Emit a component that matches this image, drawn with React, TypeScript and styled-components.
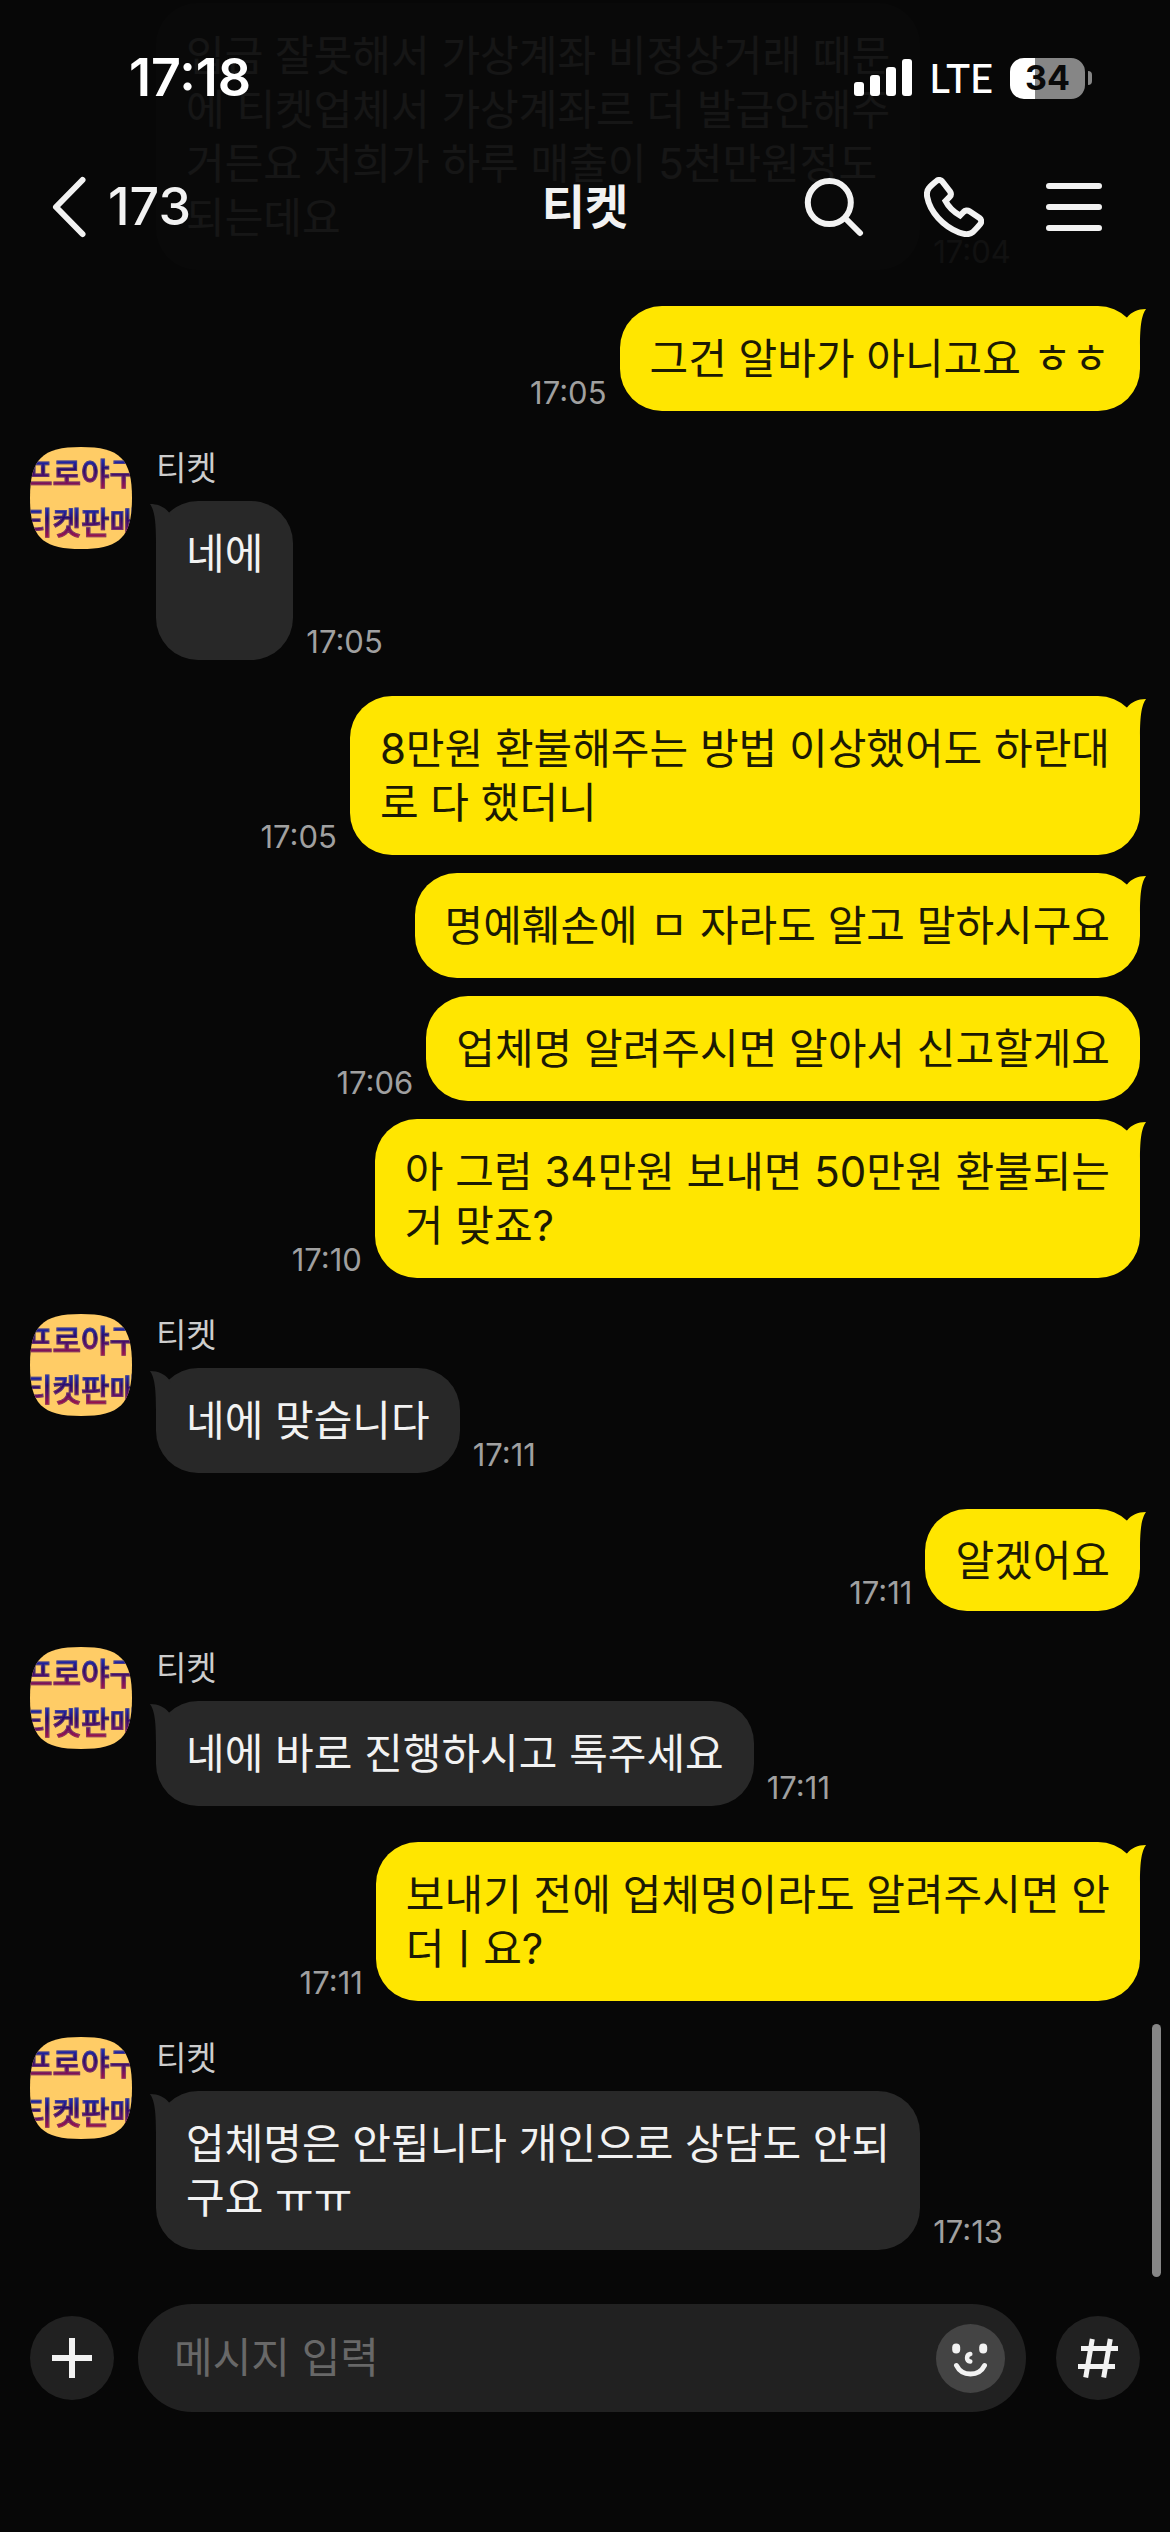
import React from 'react';
import styled, { createGlobalStyle, css } from 'styled-components';

const color = {
  page: '#070707',
  incoming: '#282828',
  outgoing: '#ffe600',
  light: '#f2f2f2',
  field: '#212121',
};

const GlobalStyle = createGlobalStyle`
  *, *::before, *::after { box-sizing: border-box; }
  html, body { margin: 0; background: ${color.page}; }
  body, button, input {
    font-family: Inter, 'Noto Sans CJK KR', 'Noto Sans', sans-serif;
  }
`;

const Screen = styled.div`
  position: relative;
  display: flex;
  flex-direction: column;
  min-height: 100vh;
  background: ${color.page};
  color: ${color.light};
`;

/* ---------- header ---------- */

const Header = styled.header`
  position: absolute;
  inset: 0 0 auto 0;
  z-index: 2;
  padding-bottom: 18px;
  background: rgba(7, 7, 7, 0.94);
`;

const StatusBar = styled.div`
  display: flex;
  align-items: center;
  justify-content: space-between;
  height: 156px;
  padding: 0 78px 0 129px;
  color: #fff;
`;

const Clock = styled.time`
  font-size: 52px;
  font-weight: 600;
  line-height: 60px;
`;

const StatusIcons = styled.div`
  display: flex;
  align-items: center;
  gap: 17px;
`;

const Carrier = styled.span`
  font-family: Lato, 'Noto Sans', sans-serif;
  font-size: 40px;
  font-weight: 500;
  line-height: 48px;
`;

const Battery = styled.div`
  display: flex;
  align-items: center;
  gap: 3px;
`;

const BatteryBody = styled.div`
  display: grid;
  place-items: center;
  width: 75px;
  height: 41px;
  border-radius: 14px;
  background: linear-gradient(to right, #fff 34%, #868686 34%);
  color: #0a0a0a;
  font-size: 34px;
  font-weight: 700;
  line-height: 40px;
`;

const BatteryCap = styled.div`
  width: 4px;
  height: 14px;
  border-radius: 0 8px 8px 0;
  background: #868686;
`;

const NavBar = styled.div`
  display: grid;
  grid-template-columns: 1fr auto 1fr;
  align-items: center;
  height: 102px;
  padding: 0 66px 0 48px;
`;

const PlainButton = styled.button`
  display: flex;
  align-items: center;
  padding: 0;
  border: 0;
  background: none;
  color: inherit;
`;

const BackButton = styled(PlainButton)`
  gap: 20px;
  font-size: 52px;
  font-weight: 500;
  line-height: 60px;
`;

const RoomTitle = styled.h1`
  margin: 0 0 0 18px;
  font-size: 47px;
  font-weight: 700;
  line-height: 60px;
`;

const NavActions = styled.div`
  display: flex;
  justify-content: flex-end;
  gap: 60px;
`;

/* ---------- conversation ---------- */

const Conversation = styled.main`
  display: flex;
  flex: 1;
  flex-direction: column;
  gap: 36px;
  padding: 3px 30px 54px;
`;

const IncomingGroup = styled.section`
  display: grid;
  grid-template-columns: 102px 1fr;
  gap: 24px;
  align-items: start;
`;

const OutgoingGroup = styled.section`
  display: flex;
  flex-direction: column;
  gap: 18px;
`;

const IncomingBody = styled.div`
  grid-column: 2;
`;

const Sender = styled.div`
  height: 54px;
  color: #cdcdcd;
  font-size: 33px;
  line-height: 42px;
`;

const AvatarTile = styled.div`
  display: flex;
  flex-direction: column;
  align-items: center;
  justify-content: center;
  width: 102px;
  height: 102px;
  overflow: hidden;
  background: #ffcc66;
  clip-path: path('M51 0C90 0 102 12 102 51S90 102 51 102 0 90 0 51 12 0 51 0Z');
`;

const AvatarText = styled.span`
  background: linear-gradient(to bottom, #1a2ab0 24%, #2a0a6a 42%, #5c0f68 60%, #a01048 78%);
  background-clip: text;
  -webkit-background-clip: text;
  -webkit-text-stroke: 1px rgba(120, 90, 110, 0.5);
  color: transparent;
  font-size: 31px;
  font-weight: 500;
  line-height: 49px;
  white-space: nowrap;
`;

const MessageRow = styled.div<{ $own?: boolean }>`
  display: flex;
  flex-direction: ${(p) => (p.$own ? 'row-reverse' : 'row')};
  align-items: flex-end;
  gap: 13px;
`;

const Bubble = styled.p<{ $own?: boolean; $compact?: boolean }>`
  position: relative;
  margin: 0;
  padding: ${(p) => (p.$compact ? '25px 30px 23px' : '26px 30px 25px')};
  border-radius: 42px;
  background: ${(p) => (p.$own ? color.outgoing : color.incoming)};
  color: ${(p) => (p.$own ? '#1c1a04' : color.light)};
  font-size: 42px;
  line-height: 54px;
  white-space: pre-wrap;
`;

const TailSvg = styled.svg<{ $own?: boolean }>`
  position: absolute;
  top: 0;
  width: 24px;
  height: 42px;
  ${(p) =>
    p.$own
      ? css`
          right: -6px;
          fill: ${color.outgoing};
        `
      : css`
          left: -6px;
          fill: ${color.incoming};
          transform: scaleX(-1);
        `}
`;

const Stamp = styled.time`
  color: #a0a0a0;
  font-size: 31px;
  line-height: 36px;
`;

const ScrollThumb = styled.div`
  position: absolute;
  right: 9px;
  bottom: 255px;
  width: 9px;
  height: 253px;
  border-radius: 5px;
  background: #868686;
`;

/* ---------- composer ---------- */

const Composer = styled.form`
  display: flex;
  align-items: center;
  gap: 24px;
  padding: 0 30px 120px;
`;

const RoundButton = styled(PlainButton)`
  flex: none;
  width: 84px;
  height: 84px;
  border-radius: 50%;
  background: ${color.field};
`;

const Field = styled.div`
  display: flex;
  flex: 1;
  align-items: center;
  height: 108px;
  margin-right: 6px;
  padding: 0 21px 0 36px;
  border-radius: 54px;
  background: ${color.field};
`;

const FieldInput = styled.input`
  flex: 1;
  min-width: 0;
  padding: 0;
  border: 0;
  outline: 0;
  background: none;
  color: ${color.light};
  font-size: 42px;
  line-height: 54px;

  &::placeholder {
    color: #686868;
    opacity: 1;
  }
`;

const EmojiButton = styled(PlainButton)`
  flex: none;
  width: 69px;
  height: 69px;
  border-radius: 50%;
  background: #444;
`;

/* ---------- drawings ---------- */

const Signal = () => (
  <svg width="58" height="38" viewBox="0 0 58 38" fill="#fff" aria-hidden="true">
    <rect x="0" y="23" width="10" height="14" rx="3" />
    <rect x="16" y="16" width="10" height="21" rx="3" />
    <rect x="32" y="8" width="10" height="29" rx="3" />
    <rect x="48" y="0" width="10" height="37" rx="3" />
  </svg>
);

const Chevron = () => (
  <svg width="40" height="66" viewBox="0 0 40 66" fill="none" stroke="currentColor" strokeWidth="6" strokeLinecap="round" strokeLinejoin="round" aria-hidden="true">
    <path d="M34.500 6 8 33l26.500 27" />
  </svg>
);

const NavIcon = ({ children }: { children: React.ReactNode }) => (
  <svg width="60" height="60" viewBox="0 0 60 60" fill="none" stroke="currentColor" strokeWidth="6" strokeLinecap="round" aria-hidden="true">
    {children}
  </svg>
);

const Tail = ({ own }: { own?: boolean }) => (
  <TailSvg $own={own} viewBox="0 0 24 42" aria-hidden="true">
    <path d="M5 11.500C9.500 6 15.500 3 24 3C20 9 18 17 18 42H3V16Z" />
  </TailSvg>
);

const Avatar = () => (
  <AvatarTile>
    <AvatarText>프로야구</AvatarText>
    <AvatarText>티켓판매</AvatarText>
  </AvatarTile>
);

/* ---------- messages ---------- */

type Message = { text: string; time?: string; tail?: boolean; compact?: boolean };
type Group = { own?: boolean; sender?: string; messages: Message[] };

const groups: Group[] = [
  {
    messages: [
      {
        text: '입금 잘못해서 가상계좌 비정상거래 때문\n에 티켓업체서 가상계좌르 더 발급안해주\n거든요 저희가 하루 매출이 5천만원정도\n되는데요',
        time: '17:04',
      },
    ],
  },
  { own: true, messages: [{ text: '그건 알바가 아니고요 ㅎㅎ', time: '17:05', tail: true }] },
  { sender: '티켓', messages: [{ text: '네에\n\n', time: '17:05', tail: true }] },
  {
    own: true,
    messages: [
      { text: '8만원 환불해주는 방법 이상했어도 하란대\n로 다 했더니', time: '17:05', tail: true },
      { text: '명예훼손에 ㅁ 자라도 알고 말하시구요', tail: true },
      { text: '업체명 알려주시면 알아서 신고할게요', time: '17:06' },
      { text: '아 그럼 34만원 보내면 50만원 환불되는\n거 맞죠?', time: '17:10', tail: true },
    ],
  },
  { sender: '티켓', messages: [{ text: '네에 맞습니다', time: '17:11', tail: true }] },
  { own: true, messages: [{ text: '알겠어요', time: '17:11', tail: true, compact: true }] },
  { sender: '티켓', messages: [{ text: '네에 바로 진행하시고 톡주세요', time: '17:11', tail: true }] },
  {
    own: true,
    messages: [{ text: '보내기 전에 업체명이라도 알려주시면 안\n더ㅣ요?', time: '17:11', tail: true }],
  },
  {
    sender: '티켓',
    messages: [{ text: '업체명은 안됩니다 개인으로 상담도 안되\n구요 ㅠㅠ', time: '17:13', tail: true }],
  },
];

const MessageLine = ({ message, own }: { message: Message; own?: boolean }) => (
  <MessageRow $own={own}>
    <Bubble $own={own} $compact={message.compact}>
      {message.tail && <Tail own={own} />}
      {message.text}
    </Bubble>
    {message.time && <Stamp>{message.time}</Stamp>}
  </MessageRow>
);

const MessageGroup = ({ group }: { group: Group }) => {
  const lines = group.messages.map((message) => (
    <MessageLine key={message.text} message={message} own={group.own} />
  ));
  if (group.own) return <OutgoingGroup>{lines}</OutgoingGroup>;
  return (
    <IncomingGroup>
      {group.sender && <Avatar />}
      <IncomingBody>
        {group.sender && <Sender>{group.sender}</Sender>}
        {lines}
      </IncomingBody>
    </IncomingGroup>
  );
};

export default function App() {
  return (
    <>
      <GlobalStyle />
      <Screen>
        <Header>
          <StatusBar>
            <Clock>17:18</Clock>
            <StatusIcons>
              <Signal />
              <Carrier>LTE</Carrier>
              <Battery>
                <BatteryBody>34</BatteryBody>
                <BatteryCap />
              </Battery>
            </StatusIcons>
          </StatusBar>
          <NavBar>
            <BackButton type="button">
              <Chevron />
              173
            </BackButton>
            <RoomTitle>티켓</RoomTitle>
            <NavActions>
              <PlainButton type="button" aria-label="검색">
                <NavIcon>
                  <circle cx="25.300" cy="25.600" r="21.500" />
                  <path d="M41 41 56 56" />
                </NavIcon>
              </PlainButton>
              <PlainButton type="button" aria-label="통화">
                <NavIcon>
                  <path d="M12.500 4C14.500 2.300 17 2.600 18.500 4.800L26 14.500C27.300 16.500 27 18.500 25.600 20L21.500 24C24 29 30 35 36 38.500L39.500 35C41 33.300 43.500 33 45.500 34.300L55.500 41C57.500 42.500 57.800 45 56.300 47C54 50 51 53 49 55C46 57.500 41 57.800 35 55.500C19 49 6 35 3.200 20C2.500 16 3.200 13 5 11C7 8.500 10 6 12.500 4Z" />
                </NavIcon>
              </PlainButton>
              <PlainButton type="button" aria-label="메뉴">
                <NavIcon>
                  <path d="M5 9H55M5 30H55M5 51H55" />
                </NavIcon>
              </PlainButton>
            </NavActions>
          </NavBar>
        </Header>

        <Conversation>
          {groups.map((group, index) => (
            <MessageGroup key={index} group={group} />
          ))}
        </Conversation>
        <ScrollThumb />

        <Composer onSubmit={(event) => event.preventDefault()}>
          <RoundButton type="button" aria-label="추가">
            <svg width="84" height="84" viewBox="0 0 84 84" fill="none" stroke="currentColor" strokeWidth="6" aria-hidden="true">
              <path d="M42 22V62M22 42H62" />
            </svg>
          </RoundButton>
          <Field>
            <FieldInput type="text" placeholder="메시지 입력" aria-label="메시지 입력" />
            <EmojiButton type="button" aria-label="이모티콘">
              <svg width="69" height="69" viewBox="0 0 69 69" fill="none" stroke="currentColor" strokeLinecap="round" aria-hidden="true">
                <rect x="16.200" y="19.500" width="8" height="10" rx="4" fill="currentColor" stroke="none" />
                <rect x="43.200" y="19.500" width="8" height="10" rx="4" fill="currentColor" stroke="none" />
                <path d="M34.300 30C30 31 30 37 34.300 37.500" strokeWidth="4.500" />
                <path d="M20.500 41.500C26 52.800 43 52.800 48.500 41.500" strokeWidth="5" />
              </svg>
            </EmojiButton>
          </Field>
          <RoundButton type="button" aria-label="샵 검색">
            <svg width="84" height="84" viewBox="0 0 84 84" fill="none" stroke="currentColor" strokeWidth="5" aria-hidden="true">
              <path d="M36.300 23 29.700 61.500M54.300 23 47.700 61.500M25 32.500H62M22 50.500H59" />
            </svg>
          </RoundButton>
        </Composer>
      </Screen>
    </>
  );
}
